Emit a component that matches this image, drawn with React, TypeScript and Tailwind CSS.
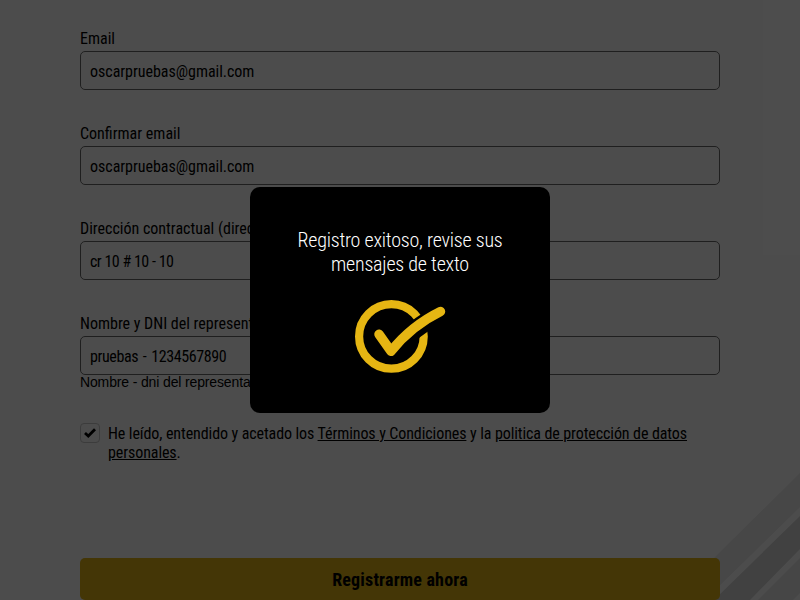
import { ReactNode } from "react";

type FieldProps = { label: string; value: string; tracking?: string; hint?: ReactNode };

function Field({ label, value, tracking = "tracking-[-0.03px]", hint }: FieldProps) {
  return (
    <div className="h-[95px] pt-[9px]">
      <div className="h-[22px] whitespace-nowrap leading-[20px]">{label}</div>
      <div className={`flex h-[39px] items-center rounded-[5px] border border-[#6a6a6a] pl-[9px] pt-[3px] leading-none ${tracking}`}>
        {value}
      </div>
      {hint}
    </div>
  );
}

export default function App() {
  return (
    <div className="relative h-[600px] w-[800px] overflow-hidden bg-white font-['Roboto',sans-serif] text-[16px] text-black [font-stretch:87%]">
      <svg className="absolute bottom-0 right-0" width="90" height="130" viewBox="710 470 90 130">
        <path d="M800 473 710 562V595L800 507Z" fill="#ededed" />
        <path d="M800 516 714 600H750L800 549Z" fill="#d9d9d9" />
        <path d="M800 558 758 600H793L800 593Z" fill="#ebebeb" />
      </svg>
      <main className="relative mx-auto w-[640px] pt-[20px]">
        <Field label="Email" value="oscarpruebas@gmail.com" />
        <Field label="Confirmar email" value="oscarpruebas@gmail.com" />
        <Field label="Dirección contractual (dirección)" value="cr 10 # 10 - 10" tracking="tracking-[-0.7px] [word-spacing:0.6px]" />
        <Field
          label="Nombre y DNI del representante legal"
          value="pruebas - 1234567890"
          tracking="tracking-[-0.4px] [word-spacing:1.5px]"
          hint={
            <div className="whitespace-nowrap font-['Liberation_Sans',sans-serif] text-[14px] leading-[15px] tracking-[-0.14px]">
              Nombre - dni del representante
            </div>
          }
        />
        <div className="mt-[23px] flex">
          <div className="flex size-5 items-center justify-center rounded border border-[#c8c8c8]">
            <svg width="12" height="10" viewBox="0 0 12 10" fill="none" stroke="black" strokeWidth="2.8">
              <path d="M1 5 4.3 8 11 1.3" />
            </svg>
          </div>
          <p className="ml-2 pt-px leading-[19px] tracking-[-0.09px]">
            He leído, entendido y acetado los <u>Términos y Condiciones</u> y la <u>politica de protección de datos</u>
            <br />
            <u>personales</u>.
          </p>
        </div>
        <button className="mt-[96px] flex h-[42px] w-full items-center justify-center rounded-[5px] bg-[#e3b414] text-[18px] font-bold tracking-[0.18px]">
          Registrarme ahora
        </button>
      </main>
      <div className="absolute inset-0 flex items-center justify-center bg-black/70">
        <section className="flex h-[226px] w-[300px] flex-col items-center rounded-[10px] bg-black pt-[41px] text-white">
          <p className="text-center text-[20px] font-light leading-[24px] tracking-[-0.22px]">
            Registro exitoso, revise sus
            <br />
            mensajes de texto
          </p>
          <svg className="mt-[20px]" width="96" height="80" viewBox="352 297 96 80" fill="none" stroke="#e6b613">
            <circle cx="391.4" cy="337.4" r="32.3" strokeWidth="8.2" />
            <path d="M392 354Q412 328.5 442 313.5" stroke="black" strokeWidth="18" />
            <path d="M379 335.3 391 352.3Q411 327 440.5 312.5" strokeWidth="9.5" strokeLinecap="round" strokeLinejoin="round" />
          </svg>
        </section>
      </div>
    </div>
  );
}
